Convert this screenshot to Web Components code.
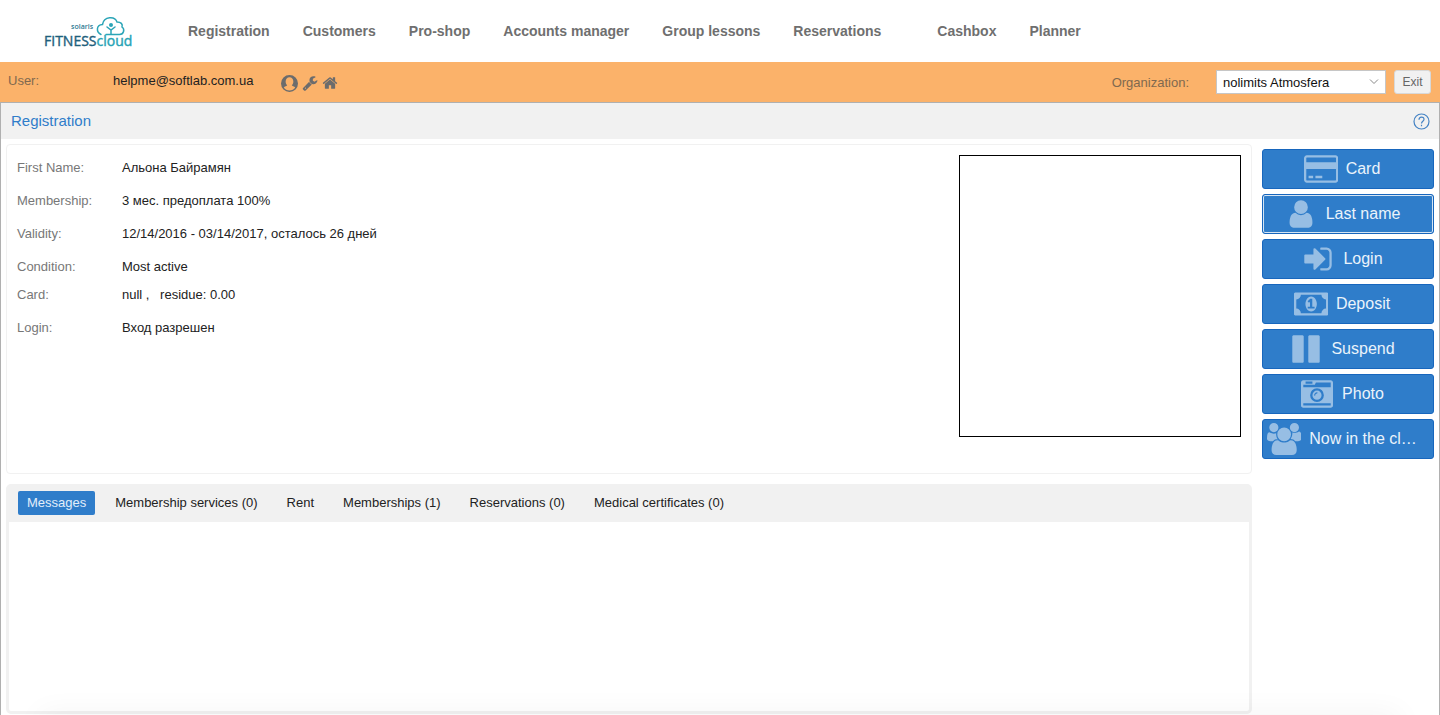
<!DOCTYPE html>
<html lang="en">
<head>
<meta charset="utf-8">
<title>Registration</title>
<style>
  html, body {
    height: 100%;
  }
  body {
    margin: 0;
    font-family: "Liberation Sans", Arial, sans-serif;
    font-size: 13px;
    color: #222;
    background: #fff;
    overflow: hidden;
  }
</style>
</head>
<body>
<fitness-app></fitness-app>

<script>
// [viewBox width, path], all on a 1792 high grid
const ICONS = {
  card: [1920, 'M1760 128q66 0 113 47t47 113v1216q0 66-47 113t-113 47h-1600q-66 0-113-47t-47-113v-1216q0-66 47-113t113-47h1600zm-1600 128q-13 0-22.500 9.500t-9.500 22.500v224h1664v-224q0-13-9.500-22.500t-22.500-9.500h-1600zm1600 1280q13 0 22.500-9.500t9.500-22.500v-608h-1664v608q0 13 9.500 22.500t22.500 9.500h1600zm-1504-128v-128h256v128h-256zm384 0v-128h384v128h-384z'],
  user: [1792, 'M1536 1399q0 109-62.500 187t-150.500 78h-854q-88 0-150.500-78t-62.500-187q0-85 8.500-160.500t31.500-152 58.500-131 94-89 134.500-34.500q131 128 313 128t313-128q76 0 134.500 34.500t94 89 58.500 131 31.500 152 8.500 160.500zm-256-887q0 159-112.500 271.500t-271.500 112.500-271.500-112.500-112.500-271.500 112.500-271.500 271.500-112.500 271.500 112.500 112.500 271.500z'],
  login: [1792, 'M1312 896q0 26-19 45l-544 544q-19 19-45 19t-45-19-19-45v-288h-448q-26 0-45-19t-19-45v-384q0-26 19-45t45-19h448v-288q0-26 19-45t45-19 45 19l544 544q19 19 19 45zm352-352v704q0 119-84.500 203.500t-203.500 84.500h-320q-13 0-22.500-9.500t-9.500-22.500q0-4-1-20t-.5-26.500 3-23.500 10-19.500 20.500-6.500h320q66 0 113-47t47-113v-704q0-66-47-113t-113-47h-312l-11.500-1-11.500-3-8-5.500-7-9-2-13.500q0-4-1-20t-.5-26.500 3-23.500 10-19.500 20.500-6.500h320q119 0 203.500 84.500t84.500 203.500z'],
  money: [1920, 'M768 1152h384v-96h-128v-448h-114l-148 137 77 80q42-37 55-57h2v288h-128v96zm512-256q0 70-21 142t-59.500 134-101.500 101-138 39-138-39-101.500-101-59.500-134-21-142 21-142 59.500-134 101.500-101 138-39 138 39 101.500 101 59.500 134 21 142zm512 256v-512q-106 0-181-75t-75-181h-1152q0 106-75 181t-181 75v512q106 0 181 75t75 181h1152q0-106 75-181t181-75zm128-832v1152q0 26-19 45t-45 19h-1792q-26 0-45-19t-19-45v-1152q0-26 19-45t45-19h1792q26 0 45 19t19 45z'],
  pause: [1792, 'M1664 192v1408q0 26-19 45t-45 19h-512q-26 0-45-19t-19-45v-1408q0-26 19-45t45-19h512q26 0 45 19t19 45zm-896 0v1408q0 26-19 45t-45 19h-512q-26 0-45-19t-19-45v-1408q0-26 19-45t45-19h512q26 0 45 19t19 45z'],
  camera: [1792, 'M928 832q0-14-9-23t-23-9q-66 0-113 47t-47 113q0 14 9 23t23 9 23-9 9-23q0-40 28-68t68-28q14 0 23-9t9-23zm224 130q0 106-75 181t-181 75-181-75-75-181 75-181 181-75 181 75 75 181zm-1024 574h1536v-128h-1536v128zm1152-574q0-159-112.500-271.500t-271.500-112.500-271.500 112.500-112.500 271.500 112.500 271.500 271.500 112.500 271.500-112.500 112.500-271.500zm-1024-642h384v-128h-384v128zm-128 192h1536v-256h-828l-64 128h-644v128zm1664-256v1280q0 53-37.500 90.500t-90.500 37.500h-1536q-53 0-90.500-37.500t-37.500-90.500v-1280q0-53 37.500-90.500t90.500-37.500h1536q53 0 90.500 37.500t37.500 90.500z'],
  users: [1920, 'M593 896q-162 5-265 128h-134q-82 0-138-40.500t-56-118.500q0-353 124-353 6 0 43.500 21t97.500 42.500 119 21.500q67 0 133-23-5 37-5 66 0 159 93 293zm1071 637q0 120-73 189.500t-194 69.500h-874q-121 0-194-69.500t-73-189.500q0-53 3.500-103.500t14-109 26.500-108.500 43-97.500 62-81 85.500-53.500 111.500-20q10 0 43 21.500t73 48 107 48 135 21.500 135-21.500 107-48 73-48 43-21.500q61 0 111.500 20t85.500 53.500 62 81 43 97.500 26.500 108.500 14 109 3.500 103.500zm-1024-1277q0 106-75 181t-181 75-181-75-75-181 75-181 181-75 181 75 75 181zm704 384q0 159-112.500 271.500t-271.500 112.500-271.500-112.500-112.500-271.500 112.500-271.500 271.500-112.500 271.500 112.500 112.500 271.500zm576 225q0 78-56 118.500t-138 40.500h-134q-103-123-265-128 93-134 93-293 0-29-5-66 66 23 133 23 59 0 119-21.500t97.500-42.500 43.500-21q124 0 124 353zm-128-609q0 106-75 181t-181 75-181-75-75-181 75-181 181-75 181 75 75 181z'],
  wrench: [1792, 'M448 1472q0-26-19-45t-45-19-45 19-19 45 19 45 45 19 45-19 19-45zm644-420l-682 682q-37 37-90 37-52 0-91-37l-106-108q-38-36-38-90 0-53 38-91l681-681q39 98 114.500 173.500t173.500 114.500zm634-435q0 39-23 106-47 134-164.500 217.500t-258.500 83.500q-185 0-316.500-131.500t-131.500-316.500 131.500-316.500 316.500-131.500q58 0 121.500 16.500t107.500 46.500q16 11 16 28t-16 28l-293 169v224l193 107q5-3 79-48.500t135.500-81 70.500-35.500q15 0 23.500 10t8.500 25z'],
  home: [1792, 'M1472 992v480q0 26-19 45t-45 19h-384v-384h-256v384h-384q-26 0-45-19t-19-45v-480q0-1 .5-3t.5-3l575-474 575 474q1 2 1 6zm223-69l-62 74q-8 9-21 11h-3q-13 0-21-7l-692-577-692 577q-12 8-24 7-13-2-21-11l-62-74q-8-10-7-23.500t11-21.500l719-599q32-26 76-26t76 26l244 204v-195q0-14 9-23t23-9h192q14 0 23 9t9 23v408l219 182q10 8 11 21.500t-7 23.500z'],
  account: [1792, 'M896 0a896 896 0 1 0 0 1792a896 896 0 1 0 0-1792zM896 250C1140 250 1300 420 1300 690C1300 860 1240 1000 1140 1090C1150 1180 1420 1220 1500 1330C1370 1520 1150 1640 896 1640S422 1520 292 1330C372 1220 642 1180 652 1090C552 1000 492 860 492 690C492 420 652 250 896 250z']
};

class AppIcon extends HTMLElement {
  constructor() {
    super();
    this.shadowDOM = this.attachShadow({mode: 'open'});
  }

  connectedCallback() {
    const [width, path] = ICONS[this.getAttribute('name')];
    this.shadowDOM.innerHTML = `
      <style>
        :host {
          display: inline-flex;
          justify-content: center;
          align-items: center;
          width: var(--icon-size, 16px);
          height: var(--icon-size, 16px);
        }
        svg {
          flex: none;
          height: 100%;
          fill: currentColor;
        }
      </style>
      <svg viewBox="0 0 ${width} 1792" fill-rule="evenodd" aria-hidden="true"><path d="${path}"/></svg>
    `;
  }
}

class AppLogo extends HTMLElement {
  constructor() {
    super();
    this.attachShadow({mode: 'open'}).innerHTML = `
      <style>
        :host {
          display: block;
          width: 94px;
          height: 40px;
        }
        svg {
          display: block;
          overflow: visible;
        }
        text {
          font-family: "Open Sans", "Noto Sans", sans-serif;
          font-weight: 500;
        }
        .small {
          font-weight: 600;
        }
      </style>
      <svg width="94" height="40" viewBox="0 0 94 40">
        <text class="small" x="27" y="18" font-size="7" fill="#2a7891">solaris</text>
        <text x="0" y="35" font-size="14" fill="#1f5f7d" stroke="#1f5f7d" stroke-width=".4">FITNESS<tspan fill="#27a3b5" stroke="#27a3b5">cloud</tspan></text>
        <g fill="none" stroke="#2ba5b7" stroke-linecap="round">
          <path stroke-width="1.500" d="M57 23.500C52 21 52 14 58.500 13.500C60 5 71 5 73 11C77 11 79 13 78 16C81 18 80 23.500 75.500 23.500H62"/>
          <path stroke-width="1.500" d="M63 16l4 3 4-3M67 19v4"/>
        </g>
        <circle cx="67" cy="14" r="2" fill="#2ba5b7"/>
      </svg>
    `;
  }
}

class NavBar extends HTMLElement {
  constructor() {
    super();
    this.attachShadow({mode: 'open'}).innerHTML = `
      <style>
        :host {
          display: flex;
          align-items: center;
          height: 62px;
          padding-left: 44px;
        }
        nav {
          display: flex;
          gap: 33px;
          margin-left: 50px;
        }
        a {
          color: #6f6f6f;
          font-size: 14px;
          line-height: 20px;
          font-weight: bold;
          text-decoration: none;
          white-space: nowrap;
        }
        .spaced {
          margin-left: 23px;
        }
      </style>
      <app-logo></app-logo>
      <nav>
        <a href="#registration">Registration</a>
        <a href="#customers">Customers</a>
        <a href="#shop">Pro-shop</a>
        <a href="#accounts">Accounts manager</a>
        <a href="#lessons">Group lessons</a>
        <a href="#reservations">Reservations</a>
        <a class="spaced" href="#cashbox">Cashbox</a>
        <a href="#planner">Planner</a>
      </nav>
    `;
  }
}

class UserBar extends HTMLElement {
  constructor() {
    super();
    this.attachShadow({mode: 'open'}).innerHTML = `
      <style>
        :host {
          display: flex;
          align-items: center;
          height: 40px;
          padding: 0 9px 0 8px;
          box-sizing: border-box;
          background: #fbb26a;
        }
        .user {
          display: flex;
          padding-bottom: 4px;
        }
        .label {
          width: 105px;
        }
        .label, label {
          color: #80694f;
        }
        .tools {
          display: flex;
          align-items: center;
          gap: 4px;
          margin-left: 28px;
          padding-top: 2px;
        }
        .tools a {
          display: flex;
          color: #6c6c6c;
        }
        .profile {
          --icon-size: 17px;
        }
        .org {
          display: flex;
          align-items: center;
          gap: 27px;
          margin-left: auto;
        }
        .picker {
          display: grid;
          align-items: center;
        }
        .picker > * {
          grid-area: 1 / 1;
        }
        .picker svg {
          justify-self: end;
          margin-right: 7px;
          pointer-events: none;
        }
        select {
          width: 170px;
          height: 24px;
          padding: 0 24px 0 6px;
          border: 1px solid #c6c6c6;
          border-radius: 0;
          background: #fff;
          color: #111;
          font: inherit;
          appearance: none;
        }
        button {
          width: 37px;
          height: 24px;
          margin-left: 8px;
          padding: 0;
          border: 1px solid #d8d8d8;
          border-radius: 3px;
          background: #f1f1f1;
          color: #666;
          font: inherit;
          font-size: 12px;
        }
      </style>
      <div class="user">
        <span class="label">User:</span>
        <span>helpme@softlab.com.ua</span>
      </div>
      <div class="tools">
        <a class="profile" href="#profile" aria-label="Profile"><app-icon name="account"></app-icon></a>
        <a href="#settings" aria-label="Settings"><app-icon name="wrench"></app-icon></a>
        <a href="#home" aria-label="Home"><app-icon name="home"></app-icon></a>
      </div>
      <div class="org">
        <label for="org">Organization:</label>
        <div class="picker">
          <select id="org"><option>nolimits Atmosfera</option></select>
          <svg width="10" height="6" viewBox="0 0 10 6"><path d="M1 .5l4 4 4-4" fill="none" stroke="#888"/></svg>
        </div>
      </div>
      <button type="button">Exit</button>
    `;
  }
}

class ClientCard extends HTMLElement {
  constructor() {
    super();
    this.attachShadow({mode: 'open'}).innerHTML = `
      <style>
        :host {
          display: flex;
          justify-content: space-between;
          min-height: 330px;
          padding: 9px 10px;
          box-sizing: border-box;
          border: 1px solid #f1f1f1;
          border-radius: 4px;
        }
        dl {
          display: grid;
          grid-template-columns: 105px auto;
          align-content: start;
          margin: 0;
          line-height: 28px;
        }
        dt {
          color: #777;
        }
        dd {
          margin: 0 0 5px;
        }
        .tight {
          margin-bottom: 0;
        }
        .gap {
          margin-left: 7px;
        }
        .photo {
          width: 282px;
          height: 282px;
          margin-top: 1px;
          box-sizing: border-box;
          border: 1px solid #000;
        }
      </style>
      <dl>
        <dt>First Name:</dt><dd>Альона Байрамян</dd>
        <dt>Membership:</dt><dd>3 мес. предоплата 100%</dd>
        <dt>Validity:</dt><dd>12/14/2016 - 03/14/2017, осталось 26 дней</dd>
        <dt>Condition:</dt><dd class="tight">Most active</dd>
        <dt>Card:</dt><dd>null , <span class="gap">residue: 0.00</span></dd>
        <dt>Login:</dt><dd>Вход разрешен</dd>
      </dl>
      <div class="photo"></div>
    `;
  }
}

class TabPanel extends HTMLElement {
  constructor() {
    super();
    this.attachShadow({mode: 'open'}).innerHTML = `
      <style>
        :host {
          display: flex;
          flex-direction: column;
          border: 3px solid #f1f1f1;
          border-radius: 5px;
        }
        .tabs {
          display: flex;
          gap: 11px;
          padding: 4px 9px 7px;
          background: #f1f1f1;
        }
        button {
          height: 24px;
          padding: 0 9px 2px;
          border: 0;
          border-radius: 2px;
          background: none;
          color: #222;
          font: inherit;
        }
        button[aria-selected="true"] {
          background: #2f7dca;
          color: #e2eefa;
        }
        .pane {
          flex: 1;
        }
      </style>
      <div class="tabs" role="tablist">
        <button type="button" role="tab" aria-selected="true">Messages</button>
        <button type="button" role="tab">Membership services (0)</button>
        <button type="button" role="tab">Rent</button>
        <button type="button" role="tab">Memberships (1)</button>
        <button type="button" role="tab">Reservations (0)</button>
        <button type="button" role="tab">Medical certificates (0)</button>
      </div>
      <div class="pane" role="tabpanel"></div>
    `;
  }
}

class ActionButton extends HTMLElement {
  constructor() {
    super();
    this.shadowDOM = this.attachShadow({mode: 'open'});
  }

  connectedCallback() {
    this.shadowDOM.innerHTML = `
      <style>
        :host {
          display: block;
        }
        button {
          display: flex;
          justify-content: center;
          align-items: center;
          gap: 9px;
          width: 100%;
          height: 40px;
          padding: 0 13px 0 2px;
          border: 1px solid #1766bd;
          border-radius: 3px;
          background: #2f7dca;
          color: #eaf3fb;
          font: inherit;
          font-size: 16px;
          white-space: nowrap;
        }
        :host([focused]) button {
          box-shadow: inset 0 0 0 1px #d5e5f4;
        }
        app-icon {
          --icon-size: 32px;
          flex: none;
          color: #97bee4;
        }
      </style>
      <button type="button"><app-icon name="${this.getAttribute('icon')}"></app-icon><slot></slot></button>
    `;
  }
}

class FitnessApp extends HTMLElement {
  constructor() {
    super();
    this.attachShadow({mode: 'open'}).innerHTML = `
      <style>
        :host {
          display: flex;
          flex-direction: column;
          height: 100%;
        }
        main {
          flex: 1;
          display: flex;
          flex-direction: column;
          border: 1px solid #b0b0b0;
          border-bottom: 0;
        }
        header {
          display: flex;
          justify-content: space-between;
          align-items: center;
          height: 36px;
          padding: 0 9px 0 10px;
          background: #f1f1f1;
          color: #2f7dca;
        }
        h1 {
          margin: 0;
          padding-bottom: 2px;
          font-size: 15px;
          font-weight: normal;
        }
        .help {
          display: flex;
          color: #4583c4;
        }
        .content {
          flex: 1;
          display: grid;
          grid-template-columns: 1fr 172px;
          gap: 10px;
          padding: 5px 5px 1px;
        }
        .left {
          display: grid;
          grid-template-rows: auto 1fr;
          gap: 10px;
        }
        aside {
          display: flex;
          flex-direction: column;
          gap: 5px;
          padding-top: 5px;
        }
        /* soft shade along the bottom edge of the window */
        .shade {
          position: fixed;
          top: 100%;
          left: 40px;
          right: 40px;
          height: 20px;
          box-shadow: 0 0 30px rgba(0, 0, 0, 0.06);
        }
      </style>
      <nav-bar></nav-bar>
      <user-bar></user-bar>
      <main>
        <header>
          <h1>Registration</h1>
          <a class="help" href="#help" aria-label="Help">
            <svg width="17" height="17" viewBox="0 0 17 17" fill="none" stroke="currentColor">
              <circle cx="8.500" cy="8.500" r="7.500" stroke-width="1.200"/>
              <path d="M6 6.800C6 3.200 11 3.200 11 6.300C11 8.200 8.500 8.200 8.500 10.500M8.500 11.800v1.400" stroke-width="1.200"/>
            </svg>
          </a>
        </header>
        <div class="content">
          <div class="left">
            <client-card></client-card>
            <tab-panel></tab-panel>
          </div>
          <aside>
            <action-button icon="card">Card</action-button>
            <action-button icon="user" focused>Last name</action-button>
            <action-button icon="login">Login</action-button>
            <action-button icon="money">Deposit</action-button>
            <action-button icon="pause">Suspend</action-button>
            <action-button icon="camera">Photo</action-button>
            <action-button icon="users">Now in the cl…</action-button>
          </aside>
        </div>
      </main>
      <div class="shade"></div>
    `;
  }
}

customElements.define('app-icon', AppIcon);
customElements.define('app-logo', AppLogo);
customElements.define('nav-bar', NavBar);
customElements.define('user-bar', UserBar);
customElements.define('client-card', ClientCard);
customElements.define('tab-panel', TabPanel);
customElements.define('action-button', ActionButton);
customElements.define('fitness-app', FitnessApp);
</script>
</body>
</html>
